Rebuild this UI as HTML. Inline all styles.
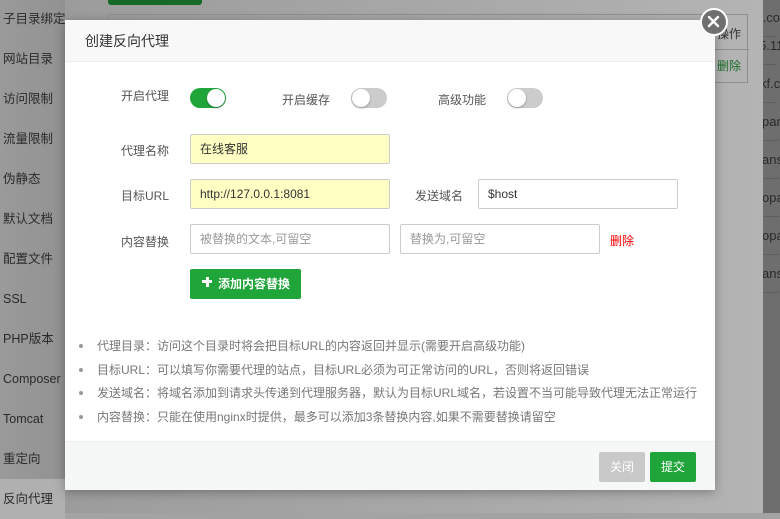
<!DOCTYPE html>
<html><head><meta charset="utf-8"><style>
*{margin:0;padding:0;box-sizing:border-box}
body{width:780px;height:513px;overflow:hidden;position:relative;background:#a3a3a3;font-family:"Liberation Sans","Noto Sans CJK SC",sans-serif;font-size:12px;color:#333}
.side{position:absolute;left:0;top:0;width:65px;height:513px;background:linear-gradient(90deg,#9a9a9a,#929292)}
.side div{position:absolute;left:3px;height:40px;line-height:40px;font-size:12.5px;color:#2a2a2a;white-space:nowrap}
.side .act{background:#b0b0b0;left:0;padding-left:3px;width:65px}
.right{position:absolute;left:763px;top:0;width:17px;height:513px;background:#6e6e6e;overflow:hidden}
.right div{position:absolute;left:0;font-size:13px;color:#2a2a2a;white-space:nowrap;border-bottom:1px solid #5e5e5e;width:17px;height:38px;line-height:38px}
.bgarea{position:absolute;left:65px;top:0;width:698px;height:513px;background:linear-gradient(90deg,#9c9c9c,#a9a9a9 60%,#b4b4b4)}
.tbl{position:absolute;left:108px;top:14px;width:640px;height:69px;border:1px solid #8f8f8f}
.gbtn{position:absolute;left:108px;top:0;width:94px;height:5px;background:#166a27;border-radius:0 0 3px 3px}
.modal{position:absolute;left:65px;top:20px;width:650px;height:470px;background:#fff;box-shadow:0 2px 10px rgba(0,0,0,.3)}
.hd{height:42px;line-height:42px;background:#f8f8f8;border-bottom:1px solid #eee;padding-left:20px;font-size:14px;color:#333}
.ft{position:absolute;left:0;bottom:0;width:650px;height:49px;background:#f6f8f8;border-top:1px solid #eee}
.lbl{position:absolute;font-size:12px;color:#555;text-align:right}
.sw{position:absolute;width:36px;height:20px;border-radius:10px;background:#ccc}
.sw::after{content:"";position:absolute;top:1px;left:1px;width:18px;height:18px;border-radius:50%;background:#fff;box-shadow:0 1px 2px rgba(0,0,0,.3)}
.sw.on{background:#20a53a}.sw.on::after{left:17px}
.inp{position:absolute;height:30px;border:1px solid #ccc;border-radius:2px;line-height:28px;padding-left:9px;font-size:12px;color:#333}
.inp.y{background:#ffffc4}
.inp.ph{color:#999}
.addb{position:absolute;left:125px;top:249px;width:111px;height:30px;background:#20a53a;border-radius:2px;color:#fff;font-size:12px;line-height:30px;padding-left:28px;font-weight:bold}
.addb::before{content:"";position:absolute;left:12px;top:11px;width:10px;height:3px;background:#fff}
.addb::after{content:"";position:absolute;left:15.5px;top:7.5px;width:3px;height:10px;background:#fff}
ul{position:absolute;left:14px;top:317px;list-style:none}
li{height:23.5px;font-size:12px;color:#777;padding-left:18px;position:relative;white-space:nowrap}
li::before{content:"";position:absolute;left:0;top:7px;width:4px;height:4px;border-radius:50%;background:#999}
.b{position:absolute;top:10px;height:30px;line-height:30px;color:#fff;font-size:12px;text-align:center;border-radius:2px}
.close{position:absolute;left:700px;top:8px;width:28px;height:28px;border-radius:50%;background:#6f6f6f;border:2.5px solid #fff}
</style></head><body>
<div class="bgarea"></div>
<div class="gbtn"></div>
<div class="tbl"><div style="position:absolute;right:0;top:0;width:40px;height:69px;border-left:1px solid #8f8f8f"></div><div style="position:absolute;left:0;top:34px;width:640px;border-top:1px solid #8f8f8f"></div>
<div style="position:absolute;right:6px;top:10px;color:#333;font-size:12px">操作</div><div style="position:absolute;right:6px;top:42px;color:#1d6e2c;font-size:12px">删除</div></div>
<div class="side">
<div style="top:-1px">子目录绑定</div><div style="top:39px">网站目录</div><div style="top:79px">访问限制</div><div style="top:119px">流量限制</div><div style="top:159px">伪静态</div><div style="top:199px">默认文档</div><div style="top:239px">配置文件</div><div style="top:279px">SSL</div><div style="top:319px">PHP版本</div><div style="top:359px">Composer</div><div style="top:399px">Tomcat</div><div style="top:439px">重定向</div><div class="act" style="top:479px">反向代理</div>
</div>
<div class="right">
<div style="top:-1px;left:-4px">f.co</div><div style="top:27px;left:-4px">5.11</div><div style="top:65px;left:-3px">kf.c</div><div style="top:103px;left:-1px">pan</div><div style="top:141px;left:-1px">ans</div><div style="top:179px;left:-1px">opa</div><div style="top:217px;left:-1px">opa</div><div style="top:255px;left:-1px">ans_</div><div style="top:293px;left:-1px;border:0"></div>
</div>
<div class="modal">
<div class="hd">创建反向代理</div>
<div class="lbl" style="left:56px;top:67px">开启代理</div>
<div class="sw on" style="left:125px;top:68px"></div>
<div class="lbl" style="left:217px;top:71px">开启缓存</div>
<div class="sw" style="left:286px;top:68px"></div>
<div class="lbl" style="left:373px;top:71px">高级功能</div>
<div class="sw" style="left:442px;top:68px"></div>
<div class="lbl" style="left:56px;top:122px">代理名称</div>
<div class="inp y" style="left:125px;top:114px;width:200px">在线客服</div>
<div class="lbl" style="left:56px;top:167px">目标URL</div>
<div class="inp y" style="left:125px;top:159px;width:200px">http://127.0.0.1:8081</div>
<div class="lbl" style="left:350px;top:167px">发送域名</div>
<div class="inp" style="left:413px;top:159px;width:200px">$host</div>
<div class="lbl" style="left:56px;top:213px">内容替换</div>
<div class="inp ph" style="left:125px;top:204px;width:200px">被替换的文本,可留空</div>
<div class="inp ph" style="left:335px;top:204px;width:200px">替换为,可留空</div>
<div class="lbl" style="left:545px;top:212px;color:#f00">删除</div>
<div class="addb">添加内容替换</div>
<ul>
<li>代理目录：访问这个目录时将会把目标URL的内容返回并显示(需要开启高级功能)</li>
<li>目标URL：可以填写你需要代理的站点，目标URL必须为可正常访问的URL，否则将返回错误</li>
<li>发送域名：将域名添加到请求头传递到代理服务器，默认为目标URL域名，若设置不当可能导致代理无法正常运行</li>
<li>内容替换：只能在使用nginx时提供，最多可以添加3条替换内容,如果不需要替换请留空</li>
</ul>
<div class="ft">
<div class="b" style="left:534px;width:46px;background:#c9c9c9">关闭</div>
<div class="b" style="left:585px;width:46px;background:#20a53a">提交</div>
</div>
</div>
<div class="close"><svg width="23" height="23" viewBox="0 0 23 23" style="position:absolute;left:0;top:0"><path d="M7 7L16 16M16 7L7 16" stroke="#fff" stroke-width="2.4" stroke-linecap="round"/></svg></div>
</body></html>
